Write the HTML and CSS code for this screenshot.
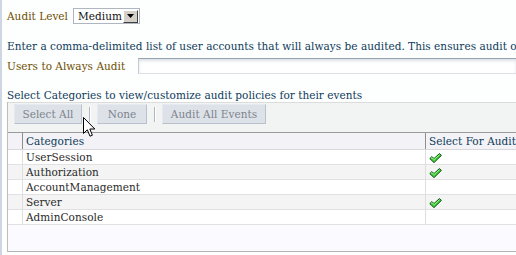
FILE: index.html
```html
<!DOCTYPE html>
<html>
<head>
<meta charset="utf-8">
<link rel="stylesheet" href="styles.css">
</head>
<body>
<div class="page">
  <div class="level-row">
    <span class="label">Audit Level</span>
    <div class="select">
      <span class="select-value">Medium</span>
      <span class="select-btn"><svg width="7" height="4" viewBox="0 0 7 4"><path d="M0 0H7L3.5 4Z" fill="#000"/></svg></span>
    </div>
  </div>
  <p class="desc">Enter a comma-delimited list of user accounts that will always be audited. This ensures audit of all events for these users.</p>
  <div class="users-row">
    <span class="label">Users to Always Audit</span>
    <div class="text-input"></div>
  </div>
  <p class="desc section">Select Categories to view/customize audit policies for their events</p>
  <div class="grid">
    <div class="toolbar">
      <span class="btn btn-all">Select All</span>
      <span class="sep"></span>
      <span class="btn btn-none">None</span>
      <span class="sep"></span>
      <span class="btn btn-events">Audit All Events</span>
    </div>
    <table class="cats">
      <thead>
        <tr><th class="rh"></th><th class="name">Categories</th><th class="audit">Select For Audit</th></tr>
      </thead>
      <tbody>
        <tr><td class="rh"></td><td class="name">UserSession</td><td class="audit"><svg class="check" width="13" height="11" viewBox="0 0 13 11"><path d="M0.8 5.6 L3 3.6 L5 5.6 L10.4 0.6 L12.4 2.4 L5 9.6 Z" fill="#3fd23a" stroke="#0c4a10" stroke-width="1" stroke-linejoin="round"/><path d="M2 5.4 L3 4.6 L5 6.6 L10.4 1.8" fill="none" stroke="#a8f59a" stroke-width="0.9"/></svg></td></tr>
        <tr class="alt"><td class="rh"></td><td class="name">Authorization</td><td class="audit"><svg class="check" width="13" height="11" viewBox="0 0 13 11"><path d="M0.8 5.6 L3 3.6 L5 5.6 L10.4 0.6 L12.4 2.4 L5 9.6 Z" fill="#3fd23a" stroke="#0c4a10" stroke-width="1" stroke-linejoin="round"/><path d="M2 5.4 L3 4.6 L5 6.6 L10.4 1.8" fill="none" stroke="#a8f59a" stroke-width="0.9"/></svg></td></tr>
        <tr><td class="rh"></td><td class="name">AccountManagement</td><td class="audit"></td></tr>
        <tr class="alt"><td class="rh"></td><td class="name">Server</td><td class="audit"><svg class="check" width="13" height="11" viewBox="0 0 13 11"><path d="M0.8 5.6 L3 3.6 L5 5.6 L10.4 0.6 L12.4 2.4 L5 9.6 Z" fill="#3fd23a" stroke="#0c4a10" stroke-width="1" stroke-linejoin="round"/><path d="M2 5.4 L3 4.6 L5 6.6 L10.4 1.8" fill="none" stroke="#a8f59a" stroke-width="0.9"/></svg></td></tr>
        <tr><td class="rh"></td><td class="name">AdminConsole</td><td class="audit"></td></tr>
      </tbody>
    </table>
    <div class="empty"></div>
  </div>
  <svg class="cursor" width="13" height="21" viewBox="0 0 13 21"><path d="M0.5 0.5 V16.5 L4.3 12.8 L7 19.2 L9.4 18.2 L6.8 12 H11.8 Z" fill="#fff" stroke="#000" stroke-width="1" stroke-linejoin="miter"/></svg>
</div>
</body>
</html>
```

FILE: styles.css
```css
html, body {
  margin: 0;
  padding: 0;
  background: #fdfefe;
}
.page {
  position: relative;
  width: 516px;
  height: 255px;
  overflow: hidden;
  border-left: 2px solid #cdd6e2;
  font-family: "DejaVu Serif", serif;
  font-size: 10.5px;
  letter-spacing: 0.03px;
  padding-top: 8px;
  box-sizing: border-box;
}
.label {
  color: #6e5000;
  white-space: nowrap;
}
.level-row {
  display: flex;
  align-items: center;
  height: 16px;
  padding-left: 5px;
}
.level-row .label {
  width: 66px;
}
.select {
  display: flex;
  align-items: center;
  width: 67px;
  height: 16px;
  box-sizing: border-box;
  border: 1px solid #aeb6c0;
  background: #fff;
}
.select-value {
  flex: 1;
  padding-left: 4px;
  color: #111;
}
.select-btn {
  width: 15px;
  height: 13px;
  box-sizing: border-box;
  margin-right: 1px;
  background: #d4d0c8;
  border-top: 1px solid #fff;
  border-left: 1px solid #fff;
  border-right: 1px solid #404040;
  border-bottom: 1px solid #404040;
  display: flex;
  align-items: center;
  justify-content: center;
}
.desc {
  margin: 15px 0 0 0;
  padding-left: 5px;
  color: #0d3b5a;
  line-height: 14px;
  white-space: nowrap;
}
.users-row {
  display: flex;
  align-items: center;
  margin-top: 5px;
  padding-left: 5px;
  height: 16px;
}
.users-row .label {
  width: 131px;
}
.text-input {
  flex: 1;
  height: 16px;
  box-sizing: border-box;
  border-top: 1px solid #98a3b0;
  border-left: 1px solid #c3cad3;
  border-bottom: 1px solid #dde1e8;
  background: #fff;
  box-shadow: inset 0 2px 3px rgba(120,135,155,0.25);
}
.desc.section {
  margin-top: 14px;
}
.grid {
  margin-left: 5px;
  border-left: 1px solid #bdbdbd;
  border-bottom: 1px solid #b5b5b5;
}
.toolbar {
  display: flex;
  align-items: flex-start;
  height: 30px;
  box-sizing: border-box;
  border-top: 1px solid #dcdcdc;
  background: #f2f3f3;
  padding: 1px 0 0 6px;
}
.btn {
  height: 20px;
  line-height: 19px;
  box-sizing: border-box;
  text-align: center;
  color: #7d848c;
  background: #dde2e9;
  border-right: 1px solid #b9c1cc;
  border-bottom: 1px solid #b9c1cc;
  border-top: 1px solid #e6eaf0;
  border-left: 1px solid #e6eaf0;
  white-space: nowrap;
}
.btn-all { width: 68px; }
.btn-none { width: 50px; }
.btn-events { width: 104px; }
.sep {
  width: 1px;
  height: 15px;
  margin: 3px 7px 0 7px;
  background: #aeb6c0;
  box-shadow: 1px 0 0 #fff;
}
.cats {
  width: 100%;
  border-collapse: collapse;
  table-layout: fixed;
}
.cats th, .cats td {
  padding: 0;
  text-align: left;
  white-space: nowrap;
  overflow: hidden;
}
.cats th {
  height: 16px;
  font-weight: normal;
  color: #0d3b5a;
  background: #f3f3f7;
  border-top: 1px solid #9a9a9a;
  border-bottom: 1px solid #d8d8dc;
}
.cats td {
  height: 14px;
  line-height: 14px;
  color: #2a2a2a;
  background: #fff;
  border-bottom: 1px solid #e1e1e1;
}
.cats tr.alt td {
  background: #f3f4f3;
}
.cats .rh {
  width: 14px;
  border-right: 1px solid #dedede;
}
.cats th.rh {
  border-right: 1px solid #8e8e8e;
}
.cats .name {
  width: 399px;
  padding-left: 3px;
}
.cats th.name {
  padding-left: 3px;
}
.cats .audit {
  padding-left: 3px;
  border-left: 1px solid #dedede;
}
.cats th.audit {
  border-left: 1px solid #8e8e8e;
  padding-left: 3px;
}
.check {
  display: block;
  margin-top: 2px;
}
.empty {
  height: 26px;
  background: #fbfaff;
}
.cursor {
  position: absolute;
  left: 81px;
  top: 117px;
}
```
